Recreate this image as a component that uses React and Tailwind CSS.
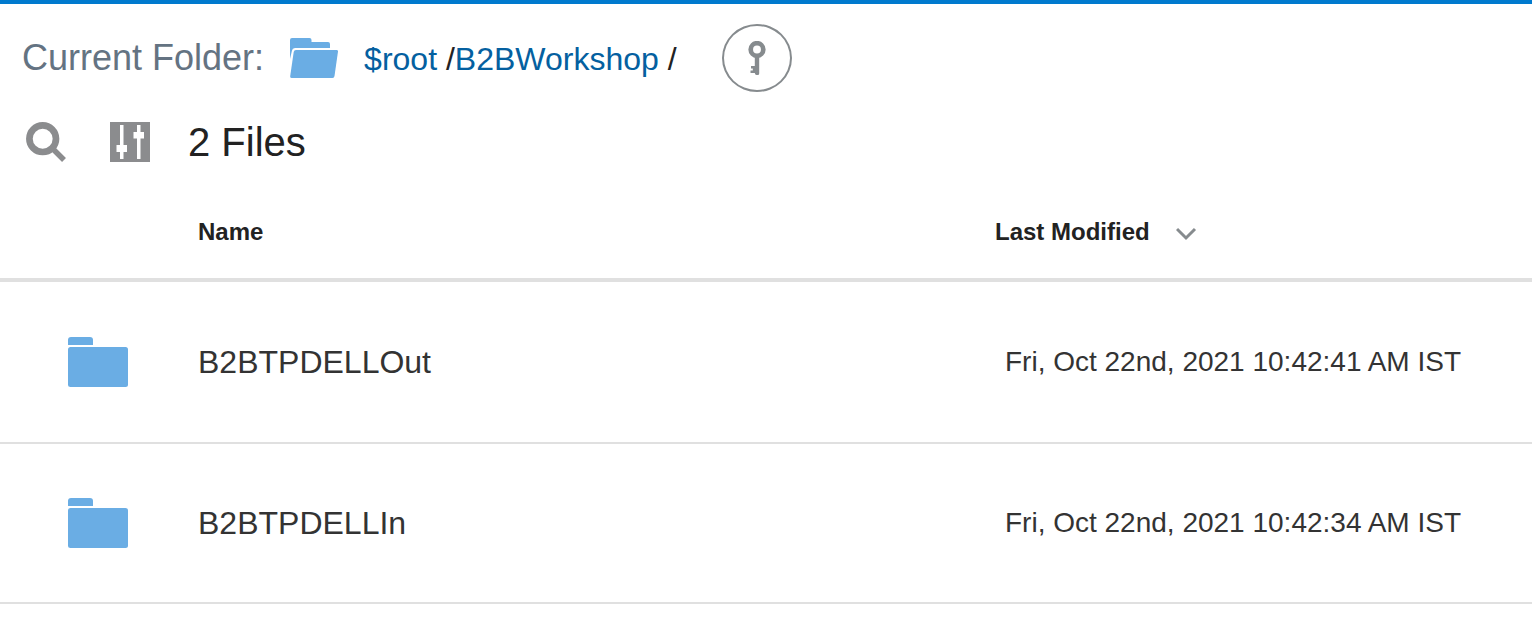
import React from "react";

const files = [
  { name: "B2BTPDELLOut", modified: "Fri, Oct 22nd, 2021 10:42:41 AM IST" },
  { name: "B2BTPDELLIn", modified: "Fri, Oct 22nd, 2021 10:42:34 AM IST" },
];

function FolderIcon() {
  return (
    <svg width="60" height="50" viewBox="0 0 60 50" fill="#6aade4" aria-hidden="true">
      <path d="M0 8V3Q0 0 3 0H22Q25 0 25 3V8Z" />
      <rect y="10" width="60" height="40" rx="2.5" />
    </svg>
  );
}

function OpenFolderIcon() {
  return (
    <svg width="48" height="40" viewBox="0 0 48 40" fill="#6aade4" aria-hidden="true">
      <path d="M0 21V2Q0 0 2 0H19.500Q21.500 0 21.500 2V4H38Q40 4 40 6V10H5Q2.300 10 2 12.500Z" />
      <path d="M6 12H46.500Q48.200 12 48 13.500L44.500 38Q44.200 40 42.500 40H1.700Q0 40 .2 38L3.700 14Q4 12 6 12Z" />
    </svg>
  );
}

function KeyIcon() {
  return (
    <svg width="18" height="34" viewBox="0 0 18 34" aria-hidden="true">
      <circle cx="9" cy="8.500" r="6.300" fill="none" stroke="#868b8e" strokeWidth="4.700" />
      <path d="M6.800 16H11.200V32.500Q11.200 34 9.700 34H8.500Q7 34 6.800 32H2.500V29.500H4.800V27.500H3V25H6.800Z" fill="#868b8e" />
    </svg>
  );
}

function SearchIcon() {
  return (
    <svg width="40" height="40" viewBox="0 0 40 40" fill="none" stroke="#8b8c8e" aria-hidden="true">
      <circle cx="16.700" cy="16.700" r="13.300" strokeWidth="6.700" />
      <path d="M26 26L38 38" strokeWidth="5.5" />
    </svg>
  );
}

function FilterIcon() {
  return (
    <svg width="40" height="40" viewBox="0 0 40 40" aria-hidden="true">
      <rect width="40" height="40" fill="#8b8c8e" />
      <path d="M10 3H13.500V23H17V30H13.500V37H10V30H6.500V23H10ZM27 3H30.500V10H34V16.500H30.500V37H27V16.500H23.500V10H27Z" fill="#fff" />
    </svg>
  );
}

export default function App() {
  return (
    <main className="border-t-4 border-[#007ace] bg-white font-['Liberation_Sans',Arial,sans-serif] text-[#222]">
      <header className="flex items-center pt-5 pl-[22px]">
        <span className="text-4xl text-[#647382]">Current Folder:</span>
        <span className="ml-[26px]">
          <OpenFolderIcon />
        </span>
        <nav aria-label="Breadcrumb" className="ml-[26px] pt-0.5 text-[32px] leading-10 whitespace-pre">
          <a href="#root" className="text-[#0460a0]">$root</a>
          {" /"}
          <a href="#b2bworkshop" className="text-[#0460a0]">B2BWorkshop</a>
          {" /"}
        </nav>
        <button
          type="button"
          aria-label="Permissions"
          className="ml-[45px] flex h-[68px] w-[70px] items-center justify-center rounded-[50%] border-2 border-[#868b8e]"
        >
          <KeyIcon />
        </button>
      </header>

      <div className="flex items-center pt-6 pl-[26px]">
        <button type="button" aria-label="Search">
          <SearchIcon />
        </button>
        <button type="button" aria-label="Filter" className="ml-11">
          <FilterIcon />
        </button>
        <h1 className="ml-[38px] text-[40px] leading-[52px]">2 Files</h1>
      </div>

      <table className="mt-4 w-full table-fixed border-separate border-spacing-0 text-left">
        <thead>
          <tr className="text-2xl">
            <td className="h-[98px] w-[198px] border-b-4 border-[#e0e0e0]" />
            <th scope="col" className="border-b-4 border-[#e0e0e0] pt-0.5 font-bold">
              Name
            </th>
            <th scope="col" className="w-[537px] border-b-4 border-[#e0e0e0] pt-0.5 font-bold">
              <button type="button" className="flex items-center gap-[26px]">
                Last Modified
                <svg className="mt-1" width="22" height="14" viewBox="0 0 22 14" fill="none" stroke="#868b8e" strokeWidth="3" aria-hidden="true">
                  <path d="M1 2L10 11L19 2" />
                </svg>
              </button>
            </th>
          </tr>
        </thead>
        <tbody>
          {files.map((file) => (
            <tr key={file.name} className="h-40 first:h-[162px]">
              <td className="border-b-2 border-[#e0e0e0] pl-[68px]">
                <FolderIcon />
              </td>
              <td className="border-b-2 border-[#e0e0e0] text-[32px] text-[#333]">{file.name}</td>
              <td className="border-b-2 border-[#e0e0e0] pl-[10px] text-[28px] whitespace-nowrap text-[#333]">{file.modified}</td>
            </tr>
          ))}
        </tbody>
      </table>
    </main>
  );
}
